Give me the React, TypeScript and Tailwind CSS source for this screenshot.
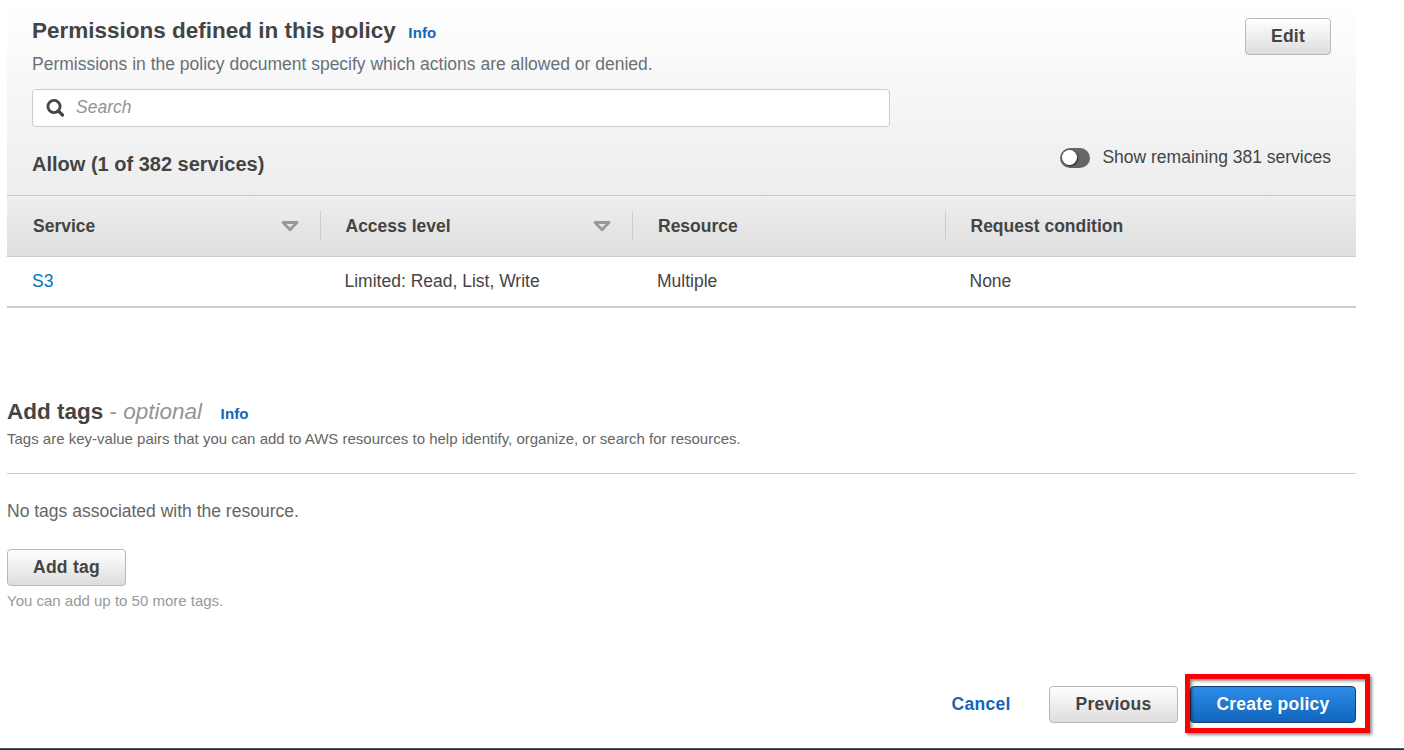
import type { ReactNode } from "react";

const grayButton =
  "flex h-[37px] items-center justify-center rounded-[4px] border border-[#b8b8b8] bg-linear-to-b from-white to-[#dddddd] pb-[1px] text-[17.5px] font-bold tracking-[0.25px] text-[#444444]";

function Button({ className, children }: { className: string; children: ReactNode }) {
  return <button className={`${grayButton} ${className}`}>{children}</button>;
}

function Info() {
  return <a className="text-[15px] font-bold tracking-[0.15px] text-[#1166bb]">Info</a>;
}

function SortIcon({ className }: { className: string }) {
  return (
    <svg width="18" height="11" viewBox="0 0 18 11" fill="none" className={className}>
      <path d="M2 1.5h14L9 8.8z" stroke="#999999" strokeWidth="2.8" strokeLinejoin="round" />
    </svg>
  );
}

function SearchIcon() {
  return (
    <svg width="19" height="20" viewBox="0 0 19 20" fill="none" stroke="#444444">
      <circle cx="8" cy="8.5" r="6.1" strokeWidth="2.8" />
      <path d="M12.3 12.8l4.2 4.2" strokeWidth="3.2" strokeLinecap="round" />
    </svg>
  );
}

const columns = [
  { title: "Service", value: "S3", sort: "mr-[21px]", head: "w-[313px] pl-[26px]" },
  { title: "Access level", value: "Limited: Read, List, Write", sort: "mr-[21px]", head: "w-[312px] border-l pl-[24.5px]" },
  { title: "Resource", value: "Multiple", sort: "", head: "w-[313px] border-l pl-[25px]" },
  { title: "Request condition", value: "None", sort: "", head: "w-[312px] border-l pl-[24.5px]" },
];

export default function App() {
  return (
    <div className="flex h-[750px] w-[1404px] flex-col overflow-hidden bg-white font-['Liberation_Sans',Arial,sans-serif] text-[17.5px] text-[#444444]">
      <main className="flex w-[1356px] grow flex-col pl-[7px]">
        <section>
          <header className="flex h-[196px] justify-between border-b border-[#cccccc] bg-linear-to-b from-white to-[#ededed] pr-[25px] pl-[25px]">
            <div className="flex flex-col">
              <div className="mt-[16px] flex h-[30px] items-baseline gap-[12.5px] leading-[30px]">
                <h1 className="text-[22.5px] font-bold">Permissions defined in this policy</h1>
                <Info />
              </div>
              <p className="mt-[8px] h-[20px] leading-[20px] text-[#687078]">
                Permissions in the policy document specify which actions are allowed or denied.
              </p>
              <div className="mt-[15px] flex h-[38px] w-[858px] items-center rounded-[4px] border border-[#cccccc] bg-white pl-[13px]">
                <SearchIcon />
                <span className="ml-[11px] pb-[2px] text-[#949494] italic">Search</span>
              </div>
              <h2 className="mt-[25px] text-[20px] leading-[24px] font-bold">Allow (1 of 382 services)</h2>
            </div>
            <div className="flex flex-col items-end">
              <Button className="mt-[18px] w-[86px]">Edit</Button>
              <label className="mt-[92px] flex h-[22px] items-center gap-[12px]">
                <span className="flex h-[20px] w-[30px] items-center rounded-full bg-[#666666] pl-[2px]">
                  <span className="mb-[1px] size-[15px] rounded-full bg-white shadow-[1px_1px_2px_rgba(0,0,0,0.6)]" />
                </span>
                <span className="pb-[2px]">Show remaining 381 services</span>
              </label>
            </div>
          </header>
          <div className="flex h-[61px] items-center border-b border-[#cccccc] bg-linear-to-b from-[#eeeeee] to-[#dfdfdf]">
            {columns.map((c) => (
              <div key={c.title} className={`flex h-[30px] items-center justify-between border-[#cccccc] ${c.head}`}>
                <span className="font-bold">{c.title}</span>
                {c.sort && <SortIcon className={c.sort} />}
              </div>
            ))}
          </div>
          <div className="flex h-[51px] items-center border-b-2 border-[#cccccc] pb-[1px]">
            {columns.map((c, i) => (
              <span key={c.title} className={`w-[312.5px] pl-[25px] ${i === 0 ? "text-[#0073bb]" : ""}`}>
                {c.value}
              </span>
            ))}
          </div>
        </section>

        <section className="mt-[89px]">
          <div className="flex h-[30px] items-baseline leading-[30px]">
            <h1 className="mr-[18.5px] text-[22.5px] font-bold">
              Add tags <span className="font-normal text-[#949494]">- <i>optional</i></span>
            </h1>
            <Info />
          </div>
          <p className="mt-[2px] text-[15px] leading-[20px] text-[#666666]">
            Tags are key-value pairs that you can add to AWS resources to help identify, organize, or search for resources.
          </p>
          <hr className="mt-[24px] border-[#cccccc]" />
          <p className="mt-[26px] leading-[22px] text-[#666666]">No tags associated with the resource.</p>
          <Button className="mt-[27px] w-[119px]">Add tag</Button>
          <p className="mt-[5px] text-[15px] leading-[20px] text-[#999999]">You can add up to 50 more tags.</p>
        </section>

        <footer className="mt-[75px] flex items-center justify-end">
          <a className="mr-[38.5px] pb-[1px] font-bold tracking-[0.25px] text-[#1166bb]">Cancel</a>
          <Button className="mr-[12px] w-[129px]">Previous</Button>
          <div className="relative">
            <button className="flex h-[37px] w-[166px] items-center justify-center rounded-[4px] border border-[#12406f] bg-linear-to-b from-[#2d8cea] to-[#1166bb] pb-[1px] font-bold tracking-[0.25px] text-white">
              Create policy
            </button>
            <div className="pointer-events-none absolute -top-[12px] -left-[5px] h-[59px] w-[185px] border-[5px] border-[#ff0000] drop-shadow-[2px_2px_1.5px_rgba(0,0,0,0.45)]" />
          </div>
        </footer>
      </main>
      <div className="h-[2px] border-t border-[#4f5866] bg-[#232f3e]" />
    </div>
  );
}
